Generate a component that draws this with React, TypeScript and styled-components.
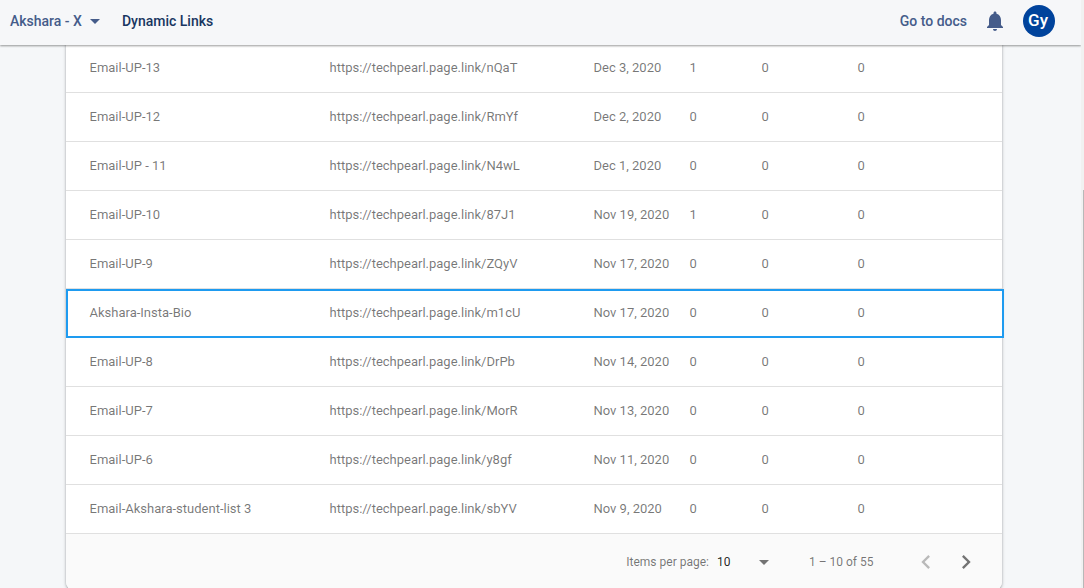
import { useState } from 'react';
import styled, { createGlobalStyle } from 'styled-components';

const GlobalStyle = createGlobalStyle`
  * {
    box-sizing: border-box;
  }

  body {
    margin: 0;
    background: #f5f7f9;
    font-family: Roboto, "Liberation Sans", sans-serif;
  }

  button,
  select {
    padding: 0;
    border: 0;
    background: none;
    font-family: inherit;
    cursor: pointer;
  }

  svg {
    display: block;
    fill: currentColor;
  }
`;

const Shell = styled.div`
  height: 100vh;
  display: flex;
  overflow: hidden;
`;

const Page = styled.div`
  flex: 1;
  min-width: 0;
  overflow: hidden;
`;

const Topbar = styled.header`
  position: relative;
  z-index: 2;
  padding: 5px 26px 8px 10px;
  display: flex;
  align-items: center;
  background: #f6f7f9;
  box-shadow: 0 1px 2px rgba(0, 0, 0, 0.4);
  color: #455c8a;
  font-size: 14px;
  font-weight: 500;
  line-height: 20px;
`;

const ProjectButton = styled.button`
  display: flex;
  align-items: center;
  gap: 1px;
  color: inherit;
  font-size: 14px;
  font-weight: 500;
`;

const PageTitle = styled.h1`
  margin: 0 auto 0 15px;
  color: #193661;
  font-size: 14px;
  font-weight: 500;
`;

const Actions = styled.div`
  display: flex;
  align-items: center;
  gap: 16px;
`;

const DocsLink = styled.a`
  color: inherit;
  text-decoration: none;
`;

const BellButton = styled.button`
  color: inherit;
`;

const Avatar = styled.button`
  width: 32px;
  height: 32px;
  padding: 0 2px 2px 0;
  border-radius: 50%;
  background: #00439c;
  color: #fff;
  font-size: 17px;
  font-weight: 500;
`;

const Main = styled.main`
  margin-top: -1px;
  padding: 0 14px 24px 0;
`;

const Card = styled.section`
  max-width: 936px;
  margin: 0 auto;
  background: #fff;
  border-radius: 0 0 8px 8px;
  box-shadow: 0 1px 2px rgba(60, 64, 67, 0.34), 0 1px 3px 1px rgba(60, 64, 67, 0.15);
`;

const LinksTable = styled.table`
  width: 100%;
  table-layout: fixed;
  border-collapse: separate;
  border-spacing: 0;
  color: rgba(0, 0, 0, 0.54);
  font-size: 13px;
  line-height: 16px;
`;

const Column = styled.col<{ $width?: number }>`
  width: ${({ $width }) => ($width ? `${$width}px` : 'auto')};
`;

const Cell = styled.td`
  height: 49px;
  padding: 0;
  border-bottom: 1px solid #e0e0e0;
  white-space: nowrap;

  &:first-child {
    padding-left: 24px;
  }
`;

const Row = styled.tr<{ $selected: boolean }>`
  position: relative;

  ${({ $selected }) => $selected && `
    td:first-child::after {
      content: "";
      position: absolute;
      inset: 0 -2px 0 0;
      border: 2px solid #1e9bf0;
      pointer-events: none;
    }
  `}
`;

const Paginator = styled.footer`
  min-height: 56px;
  padding: 0 16px;
  display: flex;
  align-items: center;
  justify-content: flex-end;
  background: #fafafa;
  border-radius: 0 0 8px 8px;
  color: rgba(0, 0, 0, 0.54);
  font-size: 12px;
`;

const SelectBox = styled.div`
  position: relative;
  width: 52px;
  margin: 0 40px 0 8px;

  select {
    width: 100%;
    appearance: none;
    color: rgba(0, 0, 0, 0.87);
    font-size: 12px;
    font-weight: 400;
    line-height: 16px;
  }

  svg {
    position: absolute;
    top: 50%;
    right: 0;
    margin-top: -2px;
    pointer-events: none;
  }
`;

const Range = styled.span`
  margin-right: 32px;
`;

const PageButton = styled.button`
  width: 40px;
  height: 40px;
  display: grid;
  place-items: center;
  color: rgba(0, 0, 0, 0.54);

  &:disabled {
    color: rgba(0, 0, 0, 0.26);
    cursor: default;
  }
`;

const ScrollTrack = styled.div`
  width: 3px;
  padding: 190px 0 0 2px;
  display: flex;
  background: #f1f1f1;
`;

const ScrollThumb = styled.div`
  flex: 1;
  background: #b8b8b8;
`;

const links = [
  { name: 'Email-UP-13', code: 'nQaT', created: 'Dec 3, 2020', clicks: 1 },
  { name: 'Email-UP-12', code: 'RmYf', created: 'Dec 2, 2020', clicks: 0 },
  { name: 'Email-UP - 11', code: 'N4wL', created: 'Dec 1, 2020', clicks: 0 },
  { name: 'Email-UP-10', code: '87J1', created: 'Nov 19, 2020', clicks: 1 },
  { name: 'Email-UP-9', code: 'ZQyV', created: 'Nov 17, 2020', clicks: 0 },
  { name: 'Akshara-Insta-Bio', code: 'm1cU', created: 'Nov 17, 2020', clicks: 0 },
  { name: 'Email-UP-8', code: 'DrPb', created: 'Nov 14, 2020', clicks: 0 },
  { name: 'Email-UP-7', code: 'MorR', created: 'Nov 13, 2020', clicks: 0 },
  { name: 'Email-UP-6', code: 'y8gf', created: 'Nov 11, 2020', clicks: 0 },
  { name: 'Email-Akshara-student-list 3', code: 'sbYV', created: 'Nov 9, 2020', clicks: 0 },
];

export default function App() {
  const [selected, setSelected] = useState('m1cU');
  const [pageSize, setPageSize] = useState('10');

  return (
    <Shell>
      <GlobalStyle />
      <Page>
        <Topbar>
          <ProjectButton type="button" aria-haspopup="menu">
            Akshara - X
            <svg width="24" height="24" viewBox="0 0 24 24" aria-hidden="true"><path d="M7 10l5 5 5-5z" /></svg>
          </ProjectButton>
          <PageTitle>Dynamic Links</PageTitle>
          <Actions>
            <DocsLink href="#docs">Go to docs</DocsLink>
            <BellButton type="button" aria-label="Notifications">
              <svg width="24" height="24" viewBox="0 0 24 24" aria-hidden="true">
                <path d="M12 22c1.1 0 2-.9 2-2h-4c0 1.1.89 2 2 2zm6-6v-5c0-3.07-1.64-5.64-4.5-6.32V4c0-.83-.67-1.5-1.5-1.5s-1.5.67-1.5 1.5v.68C7.63 5.36 6 7.92 6 11v5l-2 2v1h16v-1l-2-2z" />
              </svg>
            </BellButton>
            <Avatar type="button">Gy</Avatar>
          </Actions>
        </Topbar>
        <Main>
          <Card>
            <LinksTable aria-label="Dynamic Links">
              <colgroup>
                <Column $width={264} />
                <Column $width={264} />
                <Column $width={96} />
                <Column $width={72} />
                <Column $width={96} />
                <Column />
              </colgroup>
              <tbody>
                {links.map((link) => (
                  <Row key={link.code} $selected={link.code === selected} onClick={() => setSelected(link.code)}>
                    <Cell>{link.name}</Cell>
                    <Cell>{`https://techpearl.page.link/${link.code}`}</Cell>
                    <Cell>{link.created}</Cell>
                    <Cell>{link.clicks}</Cell>
                    <Cell>0</Cell>
                    <Cell>0</Cell>
                  </Row>
                ))}
              </tbody>
            </LinksTable>
            <Paginator>
              <label htmlFor="page-size">Items per page:</label>
              <SelectBox>
                <select id="page-size" value={pageSize} onChange={(event) => setPageSize(event.target.value)}>
                  <option>10</option>
                  <option>25</option>
                  <option>50</option>
                </select>
                <svg width="10" height="5" viewBox="0 0 10 5" aria-hidden="true"><path d="M0 0l5 5 5-5z" /></svg>
              </SelectBox>
              <Range>1 – 10 of 55</Range>
              <PageButton type="button" aria-label="Previous page" disabled>
                <svg width="28" height="28" viewBox="0 0 24 24" aria-hidden="true"><path d="M15.41 7.41L14 6l-6 6 6 6 1.41-1.41L10.83 12z" /></svg>
              </PageButton>
              <PageButton type="button" aria-label="Next page">
                <svg width="28" height="28" viewBox="0 0 24 24" aria-hidden="true"><path d="M10 6L8.59 7.41 13.17 12l-4.58 4.59L10 18l6-6z" /></svg>
              </PageButton>
            </Paginator>
          </Card>
        </Main>
      </Page>
      <ScrollTrack>
        <ScrollThumb />
      </ScrollTrack>
    </Shell>
  );
}
